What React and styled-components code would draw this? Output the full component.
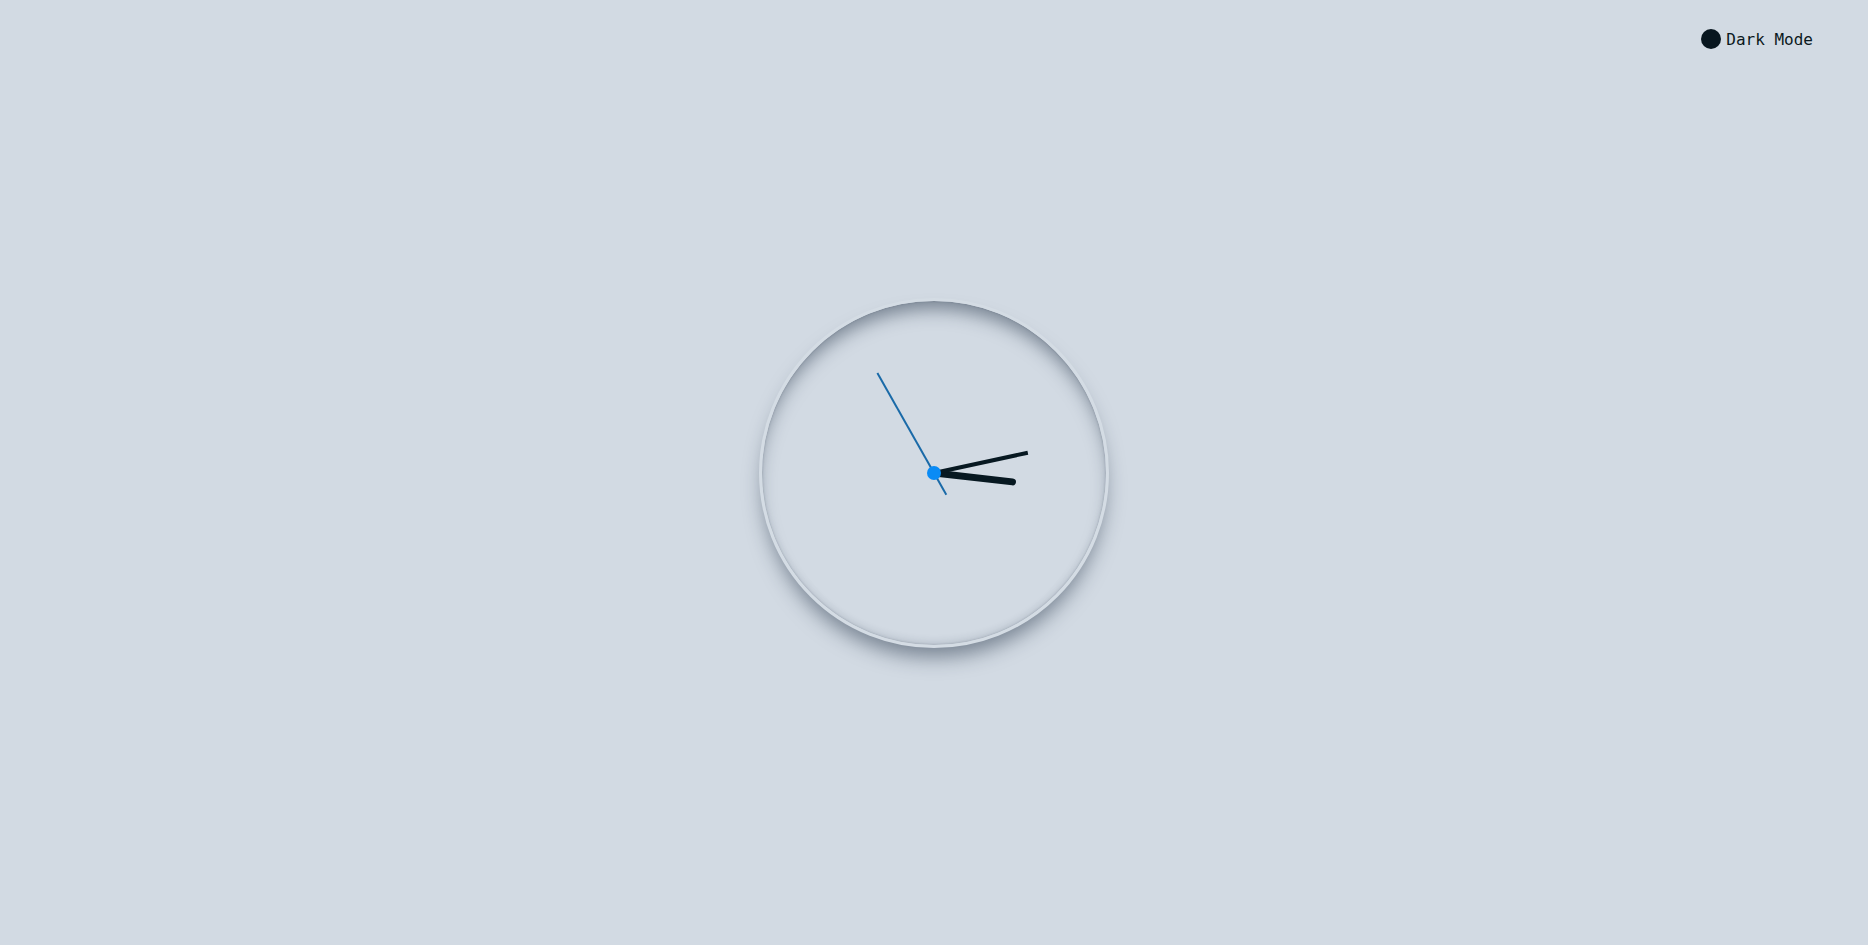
import React from "react"
import styled, { createGlobalStyle } from "styled-components"

const GlobalStyle = createGlobalStyle`
  html, body {
    margin: 0;
    padding: 0;
    background: #d2dae3;
  }
  #root {
    min-height: 100vh;
  }
`

const Page = styled.div`
  width: 100vw;
  height: 100vh;
  display: flex;
  align-items: center;
  justify-content: center;
  position: relative;
  background: #d2dae3;
  overflow: hidden;
`

const Toggle = styled.button`
  position: absolute;
  top: 29px;
  right: 55px;
  display: flex;
  align-items: center;
  gap: 5px;
  padding: 0;
  border: none;
  background: transparent;
  cursor: pointer;
  font-family: "DejaVu Sans Mono", "Liberation Mono", monospace;
  font-size: 16px;
  color: #0b1820;
`

const Dot = styled.span`
  width: 20px;
  height: 20px;
  border-radius: 50%;
  background: #08161f;
`

const Face = styled.div`
  width: 344px;
  height: 344px;
  border-radius: 50%;
  border: 3px solid #d4dce4;
  background: #d2dae3;
  position: relative;
  box-shadow: 0 14px 20px -5px rgba(30, 45, 65, 0.5),
    inset 0 14px 18px -6px rgba(30, 45, 65, 0.5),
    inset 0 0 2px rgba(30, 45, 65, 0.25),
    inset 0 -6px 10px -5px rgba(30, 45, 65, 0.2);
`

const Hand = styled.div`
  position: absolute;
  left: 50%;
  bottom: 50%;
  width: ${(p) => p.w}px;
  height: ${(p) => p.len}px;
  margin-left: ${(p) => -p.w / 2}px;
  background: ${(p) => p.color};
  border-radius: ${(p) => (p.round ? `${p.w}px ${p.w}px 0 0` : "0")};
  transform-origin: 50% ${(p) => p.len - p.tail}px;
  margin-bottom: ${(p) => -p.tail}px;
`

const Pin = styled.div`
  position: absolute;
  left: 50%;
  top: 50%;
  width: 14px;
  height: 14px;
  margin: -7px 0 0 -7px;
  border-radius: 50%;
  background: #0a8bf5;
`

export default function App() {
  const hands = [
    { w: 7, len: 82, tail: 0, color: "#071821", round: true, angle: 96.5 },
    { w: 4, len: 96, tail: 0, color: "#071821", round: false, angle: 77.8 },
    { w: 2, len: 140, tail: 25, color: "#1a6aa8", round: false, angle: 330.5 },
  ]
  return (
    <Page>
      <GlobalStyle />
      <Toggle>
        <Dot />
        Dark Mode
      </Toggle>
      <Face>
        {hands.map((h, i) => (
          <Hand
            key={i}
            w={h.w}
            len={h.len}
            tail={h.tail}
            color={h.color}
            round={h.round}
            style={{ transform: `rotate(${h.angle}deg)` }}
          />
        ))}
        <Pin />
      </Face>
    </Page>
  )
}
